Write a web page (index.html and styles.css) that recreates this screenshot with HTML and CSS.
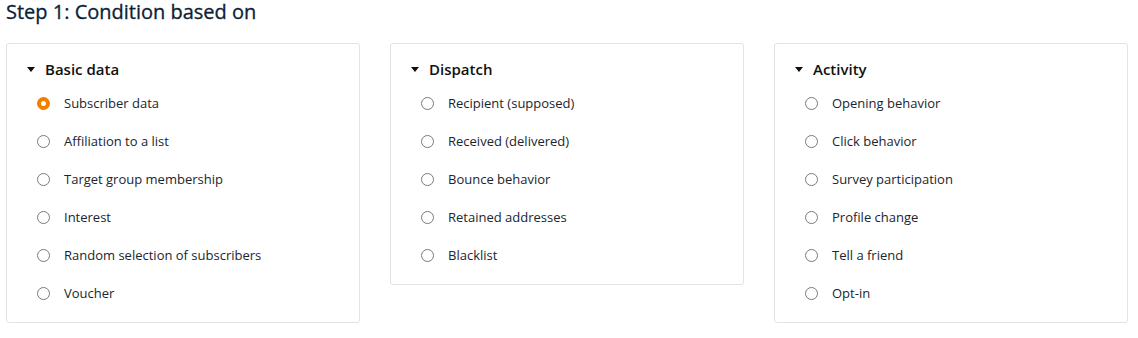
FILE: index.html
```html
<!DOCTYPE html>
<html lang="en">
<head>
    <meta charset="UTF-8">
    <meta name="viewport" content="width=device-width, initial-scale=1.0">
    <title>Step 1: Condition based on</title>
    <link rel="stylesheet" href="styles.css">
</head>
<body>
    <h2 class="step-title">Step 1: Condition based on</h2>

    <div class="groups">
        <div class="group">
            <div class="group-head"><span class="caret"></span>Basic data</div>
            <ul class="options">
                <li><label><input type="radio" name="cond" checked> Subscriber data</label></li>
                <li><label><input type="radio" name="cond"> Affiliation to a list</label></li>
                <li><label><input type="radio" name="cond"> Target group membership</label></li>
                <li><label><input type="radio" name="cond"> Interest</label></li>
                <li><label><input type="radio" name="cond"> Random selection of subscribers</label></li>
                <li><label><input type="radio" name="cond"> Voucher</label></li>
            </ul>
        </div>

        <div class="group">
            <div class="group-head"><span class="caret"></span>Dispatch</div>
            <ul class="options">
                <li><label><input type="radio" name="cond"> Recipient (supposed)</label></li>
                <li><label><input type="radio" name="cond"> Received (delivered)</label></li>
                <li><label><input type="radio" name="cond"> Bounce behavior</label></li>
                <li><label><input type="radio" name="cond"> Retained addresses</label></li>
                <li><label><input type="radio" name="cond"> Blacklist</label></li>
            </ul>
        </div>

        <div class="group">
            <div class="group-head"><span class="caret"></span>Activity</div>
            <ul class="options">
                <li><label><input type="radio" name="cond"> Opening behavior</label></li>
                <li><label><input type="radio" name="cond"> Click behavior</label></li>
                <li><label><input type="radio" name="cond"> Survey participation</label></li>
                <li><label><input type="radio" name="cond"> Profile change</label></li>
                <li><label><input type="radio" name="cond"> Tell a friend</label></li>
                <li><label><input type="radio" name="cond"> Opt-in</label></li>
            </ul>
        </div>
    </div>
</body>
</html>
```

FILE: styles.css
```css
body {
    font-family: "Open Sans", "Liberation Sans", sans-serif;
    background-color: #fff;
    color: #1a2530;
    margin: 0;
    padding: 0 6px;
}
.step-title {
    margin: 0 0 19px;
    font-size: 20px;
    line-height: 24px;
    font-weight: 400;
    color: #0a2236;
    -webkit-text-stroke: 0.3px #0a2236;
}
.groups {
    display: grid;
    grid-template-columns: repeat(3, 354px);
    column-gap: 30px;
    align-items: start;
}
.group {
    border: 1px solid #e3e3e3;
    border-radius: 3px;
    padding: 15px 20px 10px;
}
.group-head {
    display: flex;
    align-items: center;
    gap: 10px;
    font-size: 15px;
    line-height: 20px;
    font-weight: 600;
    color: #111;
}
.caret {
    width: 0;
    height: 0;
    border-left: 4.5px solid transparent;
    border-right: 4.5px solid transparent;
    border-top: 5px solid #111;
}
.options {
    list-style: none;
    margin: 5px 0 0;
    padding: 0 0 0 10px;
}
.options li {
    height: 38px;
}
.options label {
    display: flex;
    align-items: center;
    gap: 14px;
    height: 38px;
    font-size: 13px;
    cursor: pointer;
}
input[type="radio"] {
    appearance: none;
    -webkit-appearance: none;
    margin: 0;
    width: 13px;
    height: 13px;
    border: 1px solid #7a7a7a;
    border-radius: 50%;
    background: #fff;
    flex: none;
}
input[type="radio"]:checked {
    border: 4px solid #f07f00;
}
```
